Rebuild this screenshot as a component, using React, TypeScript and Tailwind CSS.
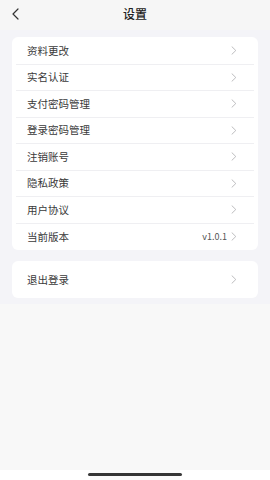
import React from 'react'

const items = ['资料更改', '实名认证', '支付密码管理', '登录密码管理', '注销账号', '隐私政策', '用户协议', '当前版本']

function Chevron() {
    return (
        <svg width="6" height="9" viewBox="0 0 6 9" fill="none" className="shrink-0">
            <path d="M1 0.8L4.8 4.5L1 8.2" stroke="#b5b5b8" strokeWidth="0.9" strokeLinecap="round" strokeLinejoin="round" />
        </svg>
    )
}

function Row({ label, value, last }: { label: string; value?: string; last?: boolean }) {
    return (
        <div className={`mx-[4px] h-[26.5px] flex items-center justify-between pl-[11px] pr-[17px] ${last ? '' : 'border-b border-[#efeff2]'}`}>
            <span className="text-[10.5px] text-[#3a3a3a]">{label}</span>
            <div className="flex items-center gap-[4px]">
                {value && <span className="text-[9px] text-[#555555]">{value}</span>}
                <Chevron />
            </div>
        </div>
    )
}

export default function App() {
    return (
        <div className="w-[270px] h-[480px] flex flex-col bg-[#f8f8f8]" style={{ fontFamily: '"Noto Sans CJK SC", "Noto Sans", sans-serif' }}>
            {/* Header */}
            <div className="h-[30px] shrink-0 bg-[#f6f6f6] relative flex items-center justify-center">
                <svg width="9" height="12" viewBox="0 0 9 12" fill="none" className="absolute left-[11px] top-[8px]">
                    <path d="M7 1L2 6L7 11" stroke="#333333" strokeWidth="1.2" strokeLinecap="round" strokeLinejoin="round" />
                </svg>
                <span className="text-[12px] text-[#222222] font-medium -mt-[3px]">设置</span>
            </div>

            {/* Content */}
            <div className="bg-[#f4f4f8] px-[12px] pt-[7px] pb-[6px] flex flex-col gap-[11px]">
                <div className="bg-white rounded-[6px] pt-[1px]">
                    {items.map((it, i) => (
                        <Row key={it} label={it} value={it === '当前版本' ? 'v1.0.1' : undefined} last={i === items.length - 1} />
                    ))}
                </div>
                <div className="bg-white rounded-[6px] h-[37px] flex items-center justify-between pl-[15px] pr-[21px]">
                    <span className="text-[10.5px] text-[#3a3a3a]">退出登录</span>
                    <Chevron />
                </div>
            </div>

            <div className="flex-1" />

            {/* Home indicator */}
            <div className="h-[10px] shrink-0 bg-white flex items-start justify-center">
                <div className="w-[94px] h-[3px] rounded-full bg-[#3a3a3a] mt-[3px]" />
            </div>
        </div>
    )
}
